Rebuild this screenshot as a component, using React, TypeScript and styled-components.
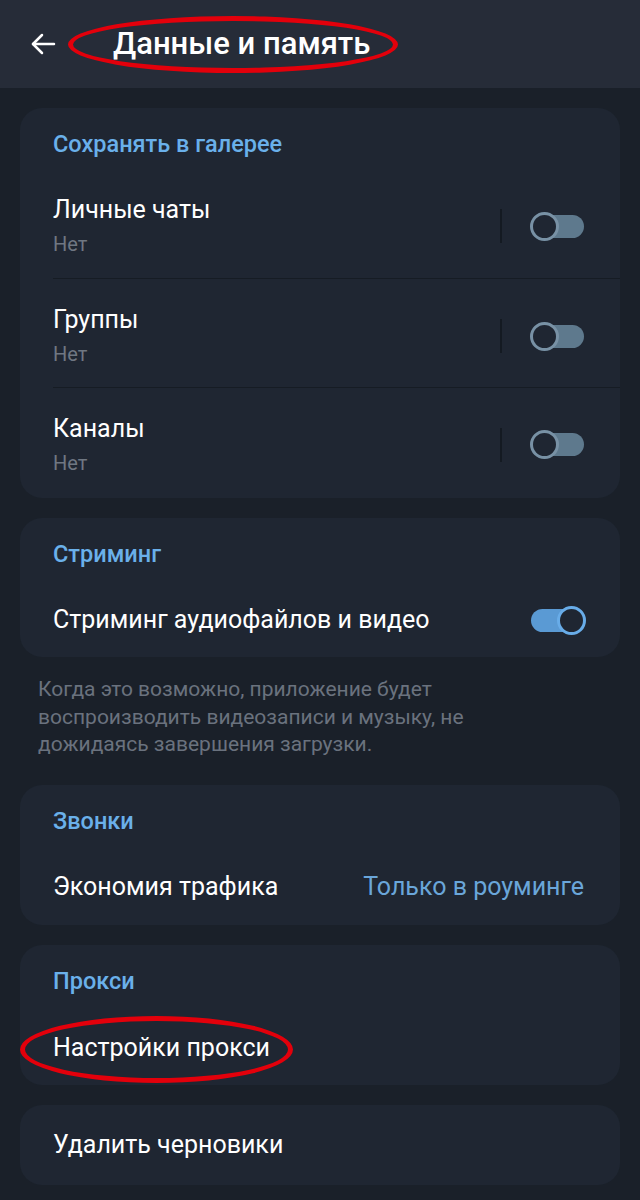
import React from "react";
import styled, { createGlobalStyle } from "styled-components";

const GlobalStyle = createGlobalStyle`
  html, body {
    margin: 0;
    padding: 0;
    background: #1a2029;
  }
  body {
    font-family: Roboto, "Noto Sans", "Liberation Sans", sans-serif;
    -webkit-font-smoothing: antialiased;
  }
`;

const Page = styled.div`
  width: 640px;
  min-height: 1200px;
  background: #1a2029;
  overflow: hidden;
`;

const TopBar = styled.header`
  height: 88px;
  background: #262c38;
  display: flex;
  align-items: center;
  padding-left: 29px;
  gap: 57px;
  box-sizing: border-box;
`;

const BackButton = styled.div`
  width: 27px;
  height: 28px;
  display: flex;
  align-items: center;
  justify-content: center;
`;

const Title = styled.h1`
  position: relative;
  margin: 0;
  color: #ffffff;
  font-size: 31px;
  line-height: 36px;
  font-weight: 500;
`;

// red annotation ring that lies over a piece of text
const Mark = styled.span<{ $l: number; $r: number; $t: number; $b: number }>`
  position: absolute;
  left: -${({ $l }) => $l}px;
  right: -${({ $r }) => $r}px;
  top: -${({ $t }) => $t}px;
  bottom: -${({ $b }) => $b}px;
  border: 5px solid #e3000b;
  border-radius: 50%;
  pointer-events: none;
`;

const Content = styled.main`
  display: flex;
  flex-direction: column;
  padding: 20px 20px 16px;
  gap: 20px;
`;

const Card = styled.section`
  background: #1f2632;
  border-radius: 22px;
`;

const SectionTitle = styled.div`
  color: #6ab0ea;
  font-size: 23.5px;
  font-weight: 500;
  padding: 23px 33px 0;
  line-height: 26px;
`;

const Row = styled.div<{ $h: number; $pt?: number; $divider?: boolean }>`
  box-sizing: border-box;
  height: ${({ $h }) => $h}px;
  padding: ${({ $pt }) => $pt ?? 0}px 36px 0 33px;
  display: flex;
  align-items: center;
  position: relative;
  ${({ $divider }) =>
    $divider &&
    `&::after {
      content: "";
      position: absolute;
      left: 33px;
      right: 0;
      bottom: 0;
      height: 1px;
      background: #161c24;
    }`}
`;

const RowText = styled.div`
  flex: 1;
  display: flex;
  flex-direction: column;
  gap: 8px;
`;

const Label = styled.div`
  color: #ffffff;
  font-size: 25px;
  line-height: 28px;
`;

const LabelWrap = styled.span`
  position: relative;
  display: inline-block;
`;

const Sub = styled.div`
  color: #6f7782;
  font-size: 20px;
  line-height: 24px;
`;

const Value = styled.div`
  color: #6aa6da;
  font-size: 25px;
  line-height: 28px;
`;

const Separator = styled.div`
  width: 2px;
  height: 34px;
  background: #141a22;
  margin-right: 28px;
`;

const Track = styled.div<{ $on: boolean }>`
  position: relative;
  width: 44px;
  height: 23px;
  border-radius: 12px;
  background: ${({ $on }) => ($on ? "#5a9ad4" : "#5e798d")};
  margin-left: ${({ $on }) => ($on ? "0" : "10px")};
  margin-right: ${({ $on }) => ($on ? "9px" : "0")};
`;

const Knob = styled.div<{ $on: boolean }>`
  position: absolute;
  top: -3px;
  ${({ $on }) => ($on ? "right: -11px;" : "left: -10px;")}
  width: 23px;
  height: 23px;
  border-radius: 50%;
  background: #1f2632;
  border: 3px solid ${({ $on }) => ($on ? "#68ace8" : "#7891a5")};
`;

const Note = styled.p`
  margin: -1px 0 6px;
  padding: 0 18px;
  max-width: 470px;
  color: #6a727e;
  font-size: 21px;
  line-height: 27.5px;
`;

const Toggle: React.FC<{ on: boolean }> = ({ on }) => (
  <Track $on={on}>
    <Knob $on={on} />
  </Track>
);

const gallery = [
  { name: "Личные чаты", h: 122, pt: 16 },
  { name: "Группы", h: 109, pt: 5 },
  { name: "Каналы", h: 110, pt: 3 },
];

const App: React.FC = () => {
  return (
    <Page>
      <GlobalStyle />
      <TopBar>
        <BackButton>
          <svg width="26" height="24" viewBox="0 0 26 24" fill="none" stroke="#fff" strokeWidth="2.5" strokeLinecap="round" strokeLinejoin="round">
            <path d="M24 12H3" />
            <path d="M12 3l-9 9 9 9" />
          </svg>
        </BackButton>
        <Title>
          Данные и память
          <Mark $l={45} $r={28} $t={10} $b={11} />
        </Title>
      </TopBar>

      <Content>
        <Card>
          <SectionTitle>Сохранять в галерее</SectionTitle>
          {gallery.map((g, i) => (
            <Row key={g.name} $h={g.h} $pt={g.pt} $divider={i < gallery.length - 1}>
              <RowText>
                <Label>{g.name}</Label>
                <Sub>Нет</Sub>
              </RowText>
              <Separator />
              <Toggle on={false} />
            </Row>
          ))}
        </Card>

        <Card>
          <SectionTitle>Стриминг</SectionTitle>
          <Row $h={90} $pt={16}>
            <RowText>
              <Label>Стриминг аудиофайлов и видео</Label>
            </RowText>
            <Toggle on />
          </Row>
        </Card>

        <Note>
          Когда это возможно, приложение будет воспроизводить видеозаписи и музыку, не дожидаясь завершения загрузки.
        </Note>

        <Card>
          <SectionTitle>Звонки</SectionTitle>
          <Row $h={91} $pt={16}>
            <RowText>
              <Label>Экономия трафика</Label>
            </RowText>
            <Value>Только в роуминге</Value>
          </Row>
        </Card>

        <Card>
          <SectionTitle>Прокси</SectionTitle>
          <Row $h={91} $pt={18}>
            <RowText>
              <Label>
                <LabelWrap>
                  Настройки прокси
                  <Mark $l={33} $r={23} $t={18} $b={21} />
                </LabelWrap>
              </Label>
            </RowText>
          </Row>
        </Card>

        <Card>
          <Row $h={80}>
            <RowText>
              <Label>Удалить черновики</Label>
            </RowText>
          </Row>
        </Card>
      </Content>
    </Page>
  );
};

export default App;
